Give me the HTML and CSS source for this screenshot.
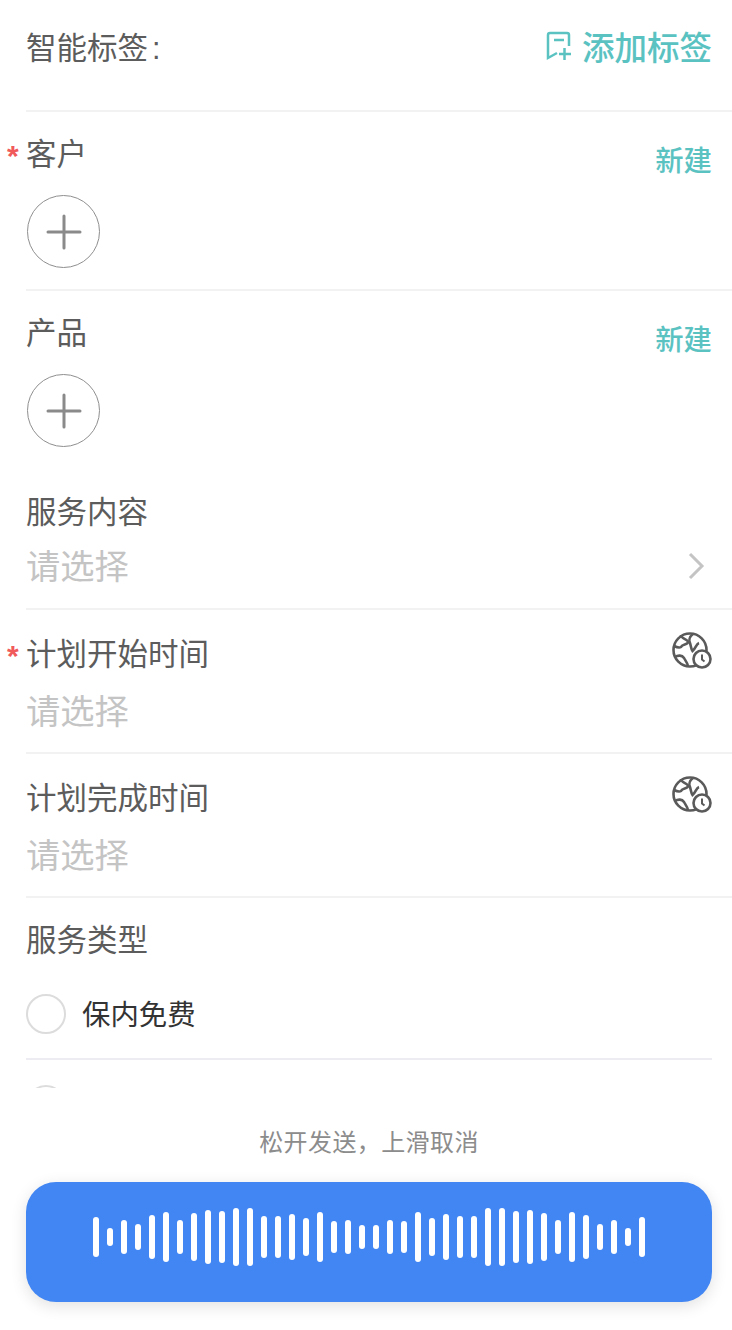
FILE: index.html
```html
<!DOCTYPE html>
<html>
<head>
<meta charset="utf-8">
<meta name="viewport" content="width=device-width, initial-scale=1.0">
<title>服务</title>
<link rel="stylesheet" href="styles.css">
</head>
<body>
	<div class="form">
		<div class="row row-tags">
			<span class="label">智能标签<span class="colon">:</span></span>
			<a class="add-tag">
				<svg class="tag-icon" width="26" height="30" viewBox="0 0 26 30" fill="none" stroke="#5bc2c2" stroke-width="2.500"><path d="M23 15V4A2 2 0 0 0 21 2H4A2 2 0 0 0 2 4V27L11 22"/><path d="M8 9H18"/><path d="M13 23H25M18.500 17V29"/></svg>
				添加标签
			</a>
		</div>

		<div class="row row-pick line-top">
			<div class="head">
				<span class="label required">客户</span>
				<a class="link">新建</a>
			</div>
			<div class="circle-add"><svg width="36" height="36" viewBox="0 0 36 36" stroke="#8a8a8a" stroke-width="3" stroke-linecap="round"><path d="M2 18H34M18 2V34"/></svg></div>
		</div>

		<div class="row row-pick line-top">
			<div class="head">
				<span class="label">产品</span>
				<a class="link">新建</a>
			</div>
			<div class="circle-add"><svg width="36" height="36" viewBox="0 0 36 36" stroke="#8a8a8a" stroke-width="3" stroke-linecap="round"><path d="M2 18H34M18 2V34"/></svg></div>
		</div>

		<div class="row row-select row-content">
			<span class="label">服务内容</span>
			<div class="value">
				<span class="placeholder">请选择</span>
				<svg width="18" height="28" viewBox="0 0 18 28" fill="none" stroke="#c4c4c4" stroke-width="3"><path d="M3 2L15 14L3 26"/></svg>
			</div>
		</div>

		<div class="row row-select line-top">
			<div class="head">
				<span class="label required">计划开始时间</span>
				<svg class="zone-icon" width="40" height="38" viewBox="0 0 40 38" fill="none" stroke="#5a5a5a" stroke-width="2.600"><circle cx="18" cy="19" r="16.500"/><path d="M9 4C9 8 16 8 16 11C16 14 10 13 9 16C7 17.500 4 16 2 15"/><path d="M21 3C17 6 17 10 18 12C19 15 19 18 20.500 20C24 17 24 13 27 12"/><path d="M3 26C6 24 10 24 12 27C13 29 15 31 16 35"/><circle cx="30" cy="28" r="8.500" fill="#fff"/><path d="M30 23.500V28.500L32.500 30.500" stroke-width="2"/></svg>
			</div>
			<span class="placeholder">请选择</span>
		</div>

		<div class="row row-select line-top">
			<div class="head">
				<span class="label">计划完成时间</span>
				<svg class="zone-icon" width="40" height="38" viewBox="0 0 40 38" fill="none" stroke="#5a5a5a" stroke-width="2.600"><circle cx="18" cy="19" r="16.500"/><path d="M9 4C9 8 16 8 16 11C16 14 10 13 9 16C7 17.500 4 16 2 15"/><path d="M21 3C17 6 17 10 18 12C19 15 19 18 20.500 20C24 17 24 13 27 12"/><path d="M3 26C6 24 10 24 12 27C13 29 15 31 16 35"/><circle cx="30" cy="28" r="8.500" fill="#fff"/><path d="M30 23.500V28.500L32.500 30.500" stroke-width="2"/></svg>
			</div>
			<span class="placeholder">请选择</span>
		</div>

		<div class="row row-type line-top">
			<span class="label">服务类型</span>
			<div class="option">
				<i class="radio"></i>
				<span class="option-text">保内免费</span>
			</div>
			<div class="option">
				<i class="radio"></i>
			</div>
		</div>
	</div>

	<div class="record">
		<p class="tip">松开发送，上滑取消</p>
		<div class="record-btn" id="wave"></div>
	</div>

	<script>
		var heights=[40,18,34,26,44,50,34,48,54,52,58,58,42,42,46,38,50,32,34,24];
		var all=heights.concat(heights.slice().reverse());
		var oWave=document.getElementById('wave');
		for (var i=0; i<all.length; i++)
		{
			var oBar=document.createElement('span');
			oBar.style.height=all[i]+'px';
			oWave.appendChild(oBar);
		}
	</script>
</body>
</html>
```
FILE: styles.css
```css
* { margin: 0; padding: 0; box-sizing: border-box; }
html, body { height: 1330px; overflow: hidden; background: #fff; }
body { font-family: "Liberation Sans", "Noto Sans CJK SC", sans-serif; color: #5c5c5c; }

.form { height: 1088px; overflow: hidden; padding-left: 26px; }
.row { padding-right: 20px; }
.line-top { border-top: 2px solid #f2f2f2; }

.label { position: relative; display: block; font-size: 30.500px; line-height: 42px; color: #5c5c5c; }
.colon { margin-left: 4px; }
.required::before { content: "*"; position: absolute; left: -19px; top: 2px; font-size: 30px; font-weight: bold; color: #f05a5a; }

.row-tags { display: flex; justify-content: space-between; align-items: center; height: 110px; padding-bottom: 20px; }
.row-tags .label { margin-top: 6px; }
.add-tag { display: flex; align-items: center; font-size: 32.500px; font-weight: 500; color: #5bc2c2; }
.tag-icon { margin-right: 10px; margin-top: 2px; margin-left: -1px; }

.head { display: flex; justify-content: space-between; align-items: flex-start; }
.link { font-size: 28.400px; font-weight: 500; line-height: 40px; color: #5bc2c2; margin-top: 8px; }

.row-pick { height: 179px; padding-top: 21px; }
.circle-add { display: flex; align-items: center; justify-content: center; width: 73px; height: 73px; margin: 14px 0 0 1px; border: 1px solid #8f8f8f; border-radius: 50%; }

.row-select { height: 144px; padding-top: 23px; }
.row-content { height: 142px; padding-top: 25px; margin-top: -2px; }
.placeholder { display: block; font-size: 34.300px; line-height: 48px; margin-top: 13px; color: #c4c4c4; }
.value { display: flex; justify-content: space-between; align-items: center; margin-top: -3px; }
.value svg { margin-right: 7px; margin-top: 11px; }
.zone-icon { margin-top: -2px; }

.row-type { padding-top: 21px; }
.option { display: flex; align-items: center; height: 90px; font-size: 28.400px; color: #333; border-bottom: 2px solid #ececf2; margin-top: 9px; }
.option + .option { margin-top: 0; border-bottom: 0; }
.option-text { margin-bottom: 3px; }
.radio { width: 40px; height: 40px; margin-right: 16px; border: 2px solid #dcdcdc; border-radius: 50%; }

.record { padding: 0 20px 0 26px; }
.tip { font-size: 24px; line-height: 34px; margin-top: 38px; text-align: center; letter-spacing: 0.400px; color: #8c8c8c; }
.record-btn { display: flex; align-items: center; justify-content: center; gap: 8px; height: 120px; margin-top: 22px; padding-bottom: 10px; border-radius: 30px; background: #4286f3; box-shadow: 0 4px 16px rgba(0,0,0,0.12); }
.record-btn span { width: 6px; border-radius: 3px; background: #fff; }
```
